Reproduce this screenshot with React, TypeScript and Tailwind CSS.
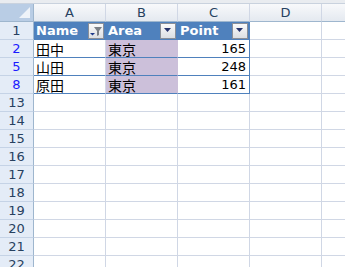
import React from 'react';

const latin = { fontFamily: '"DejaVu Sans", "Noto Sans CJK JP", sans-serif' };
const jp = { fontFamily: '"Noto Sans CJK JP", sans-serif' };

const cols = ['A', 'B', 'C', 'D', ''];

const dataRows = [
  { n: '2', name: '田中', area: '東京', point: '165' },
  { n: '5', name: '山田', area: '東京', point: '248' },
  { n: '8', name: '原田', area: '東京', point: '161' },
];

const emptyRows = ['13', '14', '15', '16', '17', '18', '19', '20', '21', '22'];

const DropButton: React.FC<{ filtered?: boolean }> = ({ filtered }) => (
  <div className="ml-auto mr-[1px] w-[16px] h-[16px] shrink-0 border border-[#8a8f98] bg-gradient-to-b from-[#fafafa] to-[#dcdfe3] flex items-center justify-center">
    {filtered ? (
      <svg width="14" height="14" viewBox="0 0 14 14">
        <path d="M5 3 H13 L10 7 V11 L8 12 V7 Z" fill="#7a7f86" />
        <path d="M1 9 H6 L3.5 11.5 Z" fill="#1f3a8a" />
      </svg>
    ) : (
      <svg width="8" height="5" viewBox="0 0 8 5">
        <path d="M0 0 H7 L3.5 4 Z" fill="#26336b" />
      </svg>
    )}
  </div>
);

const RowHead: React.FC<{ n: string; blue?: boolean }> = ({ n, blue }) => (
  <div
    className={`w-[34px] shrink-0 h-full flex items-center justify-center bg-[#e4ecf7] border-r border-[#9eb6ce] border-b border-b-[#c5d3e6] text-[13px] ${
      blue ? 'text-[#1a1aff]' : 'text-[#27415f]'
    }`}
  >
    {n}
  </div>
);

export default function App() {
  return (
    <div className="w-[345px] h-[267px] overflow-hidden bg-white leading-[16px]" style={latin}>
      <div className="h-[4px] bg-[#e9ecf0] border-b border-[#c9d2de]" />
      {/* column headers */}
      <div className="flex h-[18px]">
        <div className="w-[34px] shrink-0 h-full bg-[#b9cde5] border-r border-b border-[#9eb6ce] relative">
          <div className="absolute right-[3px] bottom-[3px] w-0 h-0 border-l-[11px] border-l-transparent border-b-[11px] border-b-[#eef3f9]" />
        </div>
        {cols.map((c, i) => (
          <div
            key={i}
            className="w-[72px] shrink-0 h-full flex items-center justify-center bg-gradient-to-b from-[#f8f9fb] to-[#e4e9f0] border-r border-[#d0d7e5] border-b border-b-[#9eb6ce] text-[13px] text-[#27415f]"
          >
            {c}
          </div>
        ))}
      </div>
      {/* table header row */}
      <div className="flex h-[18px]">
        <RowHead n="1" />
        {[
          { t: 'Name', f: true },
          { t: 'Area', f: false },
          { t: 'Point', f: false },
        ].map((h) => (
          <div
            key={h.t}
            className="w-[72px] shrink-0 h-full flex items-center pl-[2px] bg-[#4f81bd] border-r border-[#4f81bd] border-b text-white font-bold text-[13px]"
          >
            {h.t}
            <DropButton filtered={h.f} />
          </div>
        ))}
        <div className="w-[72px] shrink-0 h-full border-r border-b border-[#d0d7e5]" />
        <div className="w-[72px] shrink-0 h-full border-b border-[#d0d7e5]" />
      </div>
      {/* data rows */}
      {dataRows.map((r) => (
        <div key={r.n} className="flex h-[18px]">
          <RowHead n={r.n} blue />
          <div
            className="w-[72px] shrink-0 h-full flex items-center pl-[2px] border-r border-r-[#d0d7e5] border-b border-b-[#4f81bd] text-[14px] text-black"
            style={jp}
          >
            {r.name}
          </div>
          <div
            className="w-[72px] shrink-0 h-full flex items-center pl-[2px] bg-[#ccc0da] border-r border-r-[#ccc0da] border-b border-b-[#4f81bd] text-[14px] text-black"
            style={jp}
          >
            {r.area}
          </div>
          <div className="w-[72px] shrink-0 h-full flex items-center justify-end pr-[3px] border-r border-r-[#4f81bd] border-b border-b-[#4f81bd] text-[13px] text-black">
            {r.point}
          </div>
          <div className="w-[72px] shrink-0 h-full border-r border-b border-[#d0d7e5]" />
          <div className="w-[72px] shrink-0 h-full border-b border-[#d0d7e5]" />
        </div>
      ))}
      {/* empty rows */}
      {emptyRows.map((n) => (
        <div key={n} className="flex h-[18px]">
          <RowHead n={n} />
          {cols.map((c, i) => (
            <div key={i} className="w-[72px] shrink-0 h-full border-r border-b border-[#d0d7e5]" />
          ))}
        </div>
      ))}
    </div>
  );
}
